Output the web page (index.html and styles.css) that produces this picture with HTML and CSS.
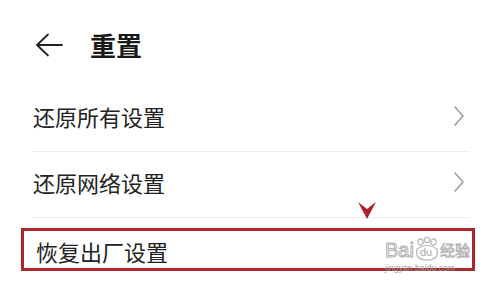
FILE: index.html
```html
<!DOCTYPE html>
<html lang="zh-CN">
<head>
<meta charset="utf-8">
<title>重置</title>
<link rel="stylesheet" href="styles.css">
</head>
<body>
<div class="page">
  <header class="header">
    <svg class="back" width="28" height="24" viewBox="0 0 28 24">
      <path d="M13 1.5 L2 12 L13 22.5 M2 12 H27" fill="none" stroke="#222" stroke-width="1.8" stroke-linecap="round" stroke-linejoin="round"/>
    </svg>
    <h1 class="title">重置</h1>
  </header>
  <div class="list">
    <div class="row">
      <span class="label">还原所有设置</span>
      <svg class="chev" width="10" height="20" viewBox="0 0 10 20"><path d="M1 1 L9 10 L1 19" fill="none" stroke="#9a9a9a" stroke-width="1.5" stroke-linecap="round" stroke-linejoin="round"/></svg>
    </div>
    <div class="row">
      <span class="label">还原网络设置</span>
      <svg class="chev" width="10" height="20" viewBox="0 0 10 20"><path d="M1 1 L9 10 L1 19" fill="none" stroke="#9a9a9a" stroke-width="1.5" stroke-linecap="round" stroke-linejoin="round"/></svg>
    </div>
  </div>
  <div class="highlight">
    <span class="label">恢复出厂设置</span>
  </div>
  <svg class="marker" width="18" height="18" viewBox="0 0 18 18">
    <polygon points="0,1 9,8 18,1 9,18" fill="#b0202a"/>
  </svg>
  <div class="watermark">
    <div class="wm-top">
      <span class="wm-bai">Bai</span>
      <span class="wm-paw">
        <svg width="26" height="26" viewBox="0 0 26 26">
          <g fill="none" stroke="#b5b5b5" stroke-width="1.2">
            <ellipse cx="6.5" cy="6" rx="2.6" ry="3.2"/>
            <ellipse cx="13" cy="3.8" rx="2.6" ry="2.8"/>
            <ellipse cx="19.5" cy="6" rx="2.6" ry="3.2"/>
            <path d="M3 13 Q13 6 23 13 Q25.5 24 13 24 Q0.5 24 3 13 Z"/>
          </g>
        </svg>
        <span class="wm-du">du</span>
      </span>
      <span class="wm-jy">经验</span>
    </div>
    <div class="wm-url">jingyan.baidu.com</div>
  </div>
</div>
</body>
</html>
```

FILE: styles.css
```css
html, body {
  margin: 0;
  padding: 0;
  background: #ffffff;
}
.page {
  position: relative;
  width: 500px;
  height: 285px;
  overflow: hidden;
  font-family: "Noto Sans CJK SC", "Noto Sans", sans-serif;
  color: #1f1f1f;
}
.header {
  height: 86px;
  box-sizing: border-box;
  padding: 3px 0 0 35px;
  display: flex;
  align-items: center;
}
.back {
  display: block;
}
.title {
  margin: 0 0 0 27px;
  font-size: 26px;
  font-weight: 700;
  line-height: 30px;
  color: #1a1a1a;
}
.list {
  margin: 0 30px 0 32px;
}
.row {
  height: 66px;
  box-sizing: border-box;
  padding-bottom: 5px;
  border-bottom: 1px solid #ececec;
  display: flex;
  align-items: center;
  justify-content: space-between;
}
.label {
  font-size: 22px;
  line-height: 26px;
  padding-left: 1px;
  color: #222;
}
.chev {
  display: block;
  margin-right: 6px;
}
.highlight {
  margin: 10px 0 0 21px;
  width: 454px;
  height: 43px;
  box-sizing: border-box;
  border: 3px solid #a8262c;
  padding: 3px 0 0 11px;
  display: flex;
  align-items: center;
}
.marker {
  position: absolute;
  left: 358px;
  top: 201px;
}
.watermark {
  position: absolute;
  left: 385px;
  top: 229px;
  white-space: nowrap;
  color: #b8b8b8;
}
.wm-top {
  display: flex;
  align-items: flex-end;
  height: 33px;
}
.wm-bai {
  font-family: "Liberation Sans", sans-serif;
  font-size: 20px;
  line-height: 22px;
  color: transparent;
  -webkit-text-stroke: 1px #b0b0b0;
  margin-bottom: 1px;
}
.wm-paw {
  position: relative;
  width: 26px;
  height: 26px;
}
.wm-paw svg {
  display: block;
}
.wm-du {
  position: absolute;
  left: 6px;
  top: 10px;
  font-family: "Liberation Sans", sans-serif;
  font-size: 11px;
  line-height: 13px;
  color: #a8a8a8;
}
.wm-jy {
  font-size: 15px;
  line-height: 20px;
  color: transparent;
  -webkit-text-stroke: 0.8px #b0b0b0;
  margin-bottom: 2px;
}
.wm-url {
  font-family: "Liberation Sans", sans-serif;
  font-size: 8.5px;
  line-height: 9px;
  color: #9a9a9a;
  letter-spacing: 0.1px;
  margin-top: 2px;
}
```
